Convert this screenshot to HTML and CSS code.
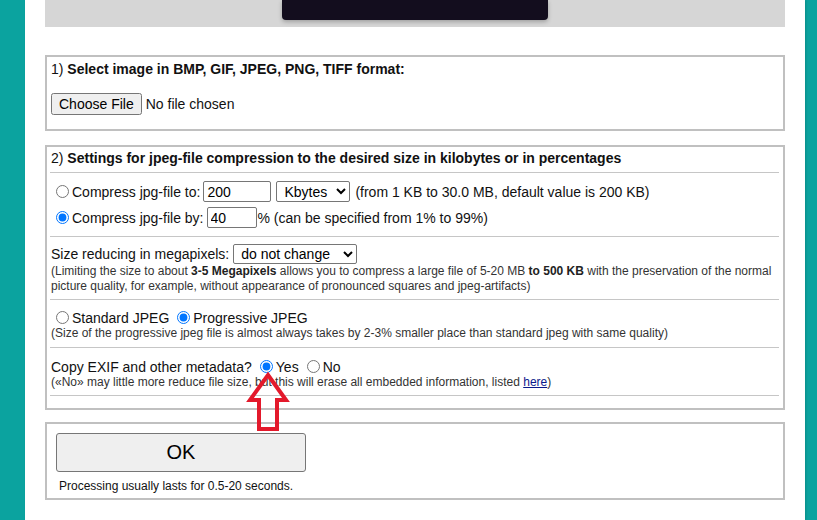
FILE: index.html
```html
<!DOCTYPE html>
<html lang="en">
<head>
  <meta charset="UTF-8">
  <title>Compress JPEG to the desired size</title>
  <link rel="stylesheet" href="styles.css">
</head>
<body>

  <div class="page">
    <!-- banner strip -->
    <div class="banner">
      <div class="banner-ad"></div>
    </div>

    <form class="tool-form" onsubmit="return false;">

      <!-- step 1: file -->
      <div class="box box-file">
        <div class="step-title">1) <b>Select image in BMP, GIF, JPEG, PNG, TIFF format:</b></div>
        <div class="file-row">
          <input type="file" name="uploadfile" accept="image/*">
        </div>
      </div>

      <!-- step 2: settings -->
      <div class="box box-settings">
        <div class="step-title section">2) <b>Settings for jpeg-file compression to the desired size in kilobytes or in percentages</b></div>

        <div class="section size-opts">
          <div class="row">
            <label><input type="radio" name="mode" value="size"> Compress jpg-file to:</label>
            <input type="text" class="inp-size" value="200">
            <select class="sel-units">
              <option>Kbytes</option>
              <option>Mbytes</option>
            </select>
            <span>(from 1 KB to 30.0 MB, default value is 200 KB)</span>
          </div>
          <div class="row">
            <label><input type="radio" name="mode" value="percent" checked> Compress jpg-file by:</label>
            <input type="text" class="inp-percent" value="40"><span class="pct">% (can be specified from 1% to 99%)</span>
          </div>
        </div>

        <div class="section mpx">
          <div class="row">
            <span>Size reducing in megapixels:</span>
            <select class="sel-mpx">
              <option>do not change</option>
              <option>3 Megapixels</option>
              <option>5 Megapixels</option>
            </select>
          </div>
          <div class="note">(Limiting the size to about <b>3-5 Megapixels</b> allows you to compress a large file of 5-20 MB <b>to 500 KB</b> with the preservation of the normal picture quality, for example, without appearance of pronounced squares and jpeg-artifacts)</div>
        </div>

        <div class="section jpeg-type">
          <div class="row">
            <label><input type="radio" name="progressive" value="0">Standard JPEG</label>
            <label class="gap"><input type="radio" name="progressive" value="1" checked>Progressive JPEG</label>
          </div>
          <div class="note">(Size of the progressive jpeg file is almost always takes by 2-3% smaller place than standard jpeg with same quality)</div>
        </div>

        <div class="section exif">
          <div class="row">
            <span>Copy EXIF and other metadata?</span>
            <label class="gap"><input type="radio" name="exif" value="1" checked>Yes</label>
            <label class="gap"><input type="radio" name="exif" value="0">No</label>
          </div>
          <div class="note">(«No» may little more reduce file size, but this will erase all embedded information, listed <a href="#">here</a>)</div>
        </div>
      </div>

      <!-- step 3: submit -->
      <div class="box box-submit">
        <button type="submit" class="ok-btn">OK</button>
        <div class="note hint">Processing usually lasts for 0.5-20 seconds.</div>
      </div>

    </form>

    <!-- hint arrow pointing at the EXIF option -->
    <svg class="hint-arrow" width="44" height="62" viewBox="0 0 44 62">
      <polygon points="22,3 40,28 31,28 31,57 13,57 13,28 4,28" fill="none" stroke="#e3192b" stroke-width="4" stroke-linejoin="miter"/>
    </svg>
  </div>

</body>
</html>
```

FILE: styles.css
```css
* {
  box-sizing: border-box;
}
body {
  margin: 0;
  background: #0ba39f;
  font-family: Arial, 'Liberation Sans', sans-serif;
  font-size: 14px;
  color: #111;
  overflow: hidden;
}
.page {
  position: relative;
  width: 780px;
  min-height: 520px;
  margin-left: 25px;
  padding: 0 20px;
  background: #fff;
  box-shadow: 1px 0 2px rgba(0, 0, 0, 0.15);
}

/* top banner */
.banner {
  height: 27px;
  background: #d6d6d6;
  display: flex;
  justify-content: center;
}
.banner-ad {
  width: 266px;
  height: 20px;
  background: #130d1e;
  border-radius: 0 0 4px 4px;
  box-shadow: 0 2px 4px rgba(0, 0, 0, 0.25);
}

.tool-form {
  padding-top: 28px;
}

/* boxes */
.box {
  border: 2px solid #c0c0c0;
  padding: 0 4px;
  margin-bottom: 14px;
}
.step-title {
  line-height: 16px;
  padding-top: 4px;
}
.box-file {
  padding-bottom: 15px;
}
.file-row {
  margin-top: 16px;
  height: 21px;
}
.file-row input {
  font-family: Arial, 'Liberation Sans', sans-serif;
  font-size: 14px;
  margin: 0;
}

.section {
  border-bottom: 1px solid #c6c6c6;
  margin-left: -1px;
  padding-left: 1px;
}
.box-settings .step-title {
  padding-top: 3px;
  padding-bottom: 6px;
}
.box-settings {
  padding-bottom: 12px;
  margin-bottom: 12px;
}
.row {
  display: flex;
  align-items: center;
  height: 21px;
  white-space: nowrap;
}
.row label {
  display: flex;
  align-items: center;
}
.row input[type="radio"] {
  margin: 0 3px 0 5px;
}
.row label.gap {
  margin-left: 3px;
}
.row input[type="text"],
.row select {
  font-family: Arial, 'Liberation Sans', sans-serif;
  font-size: 14px;
  height: 21px;
  padding: 0 3px;
  border: 1px solid #767676;
  border-radius: 2px;
  color: #000;
  background: #fff;
}
.size-opts {
  padding-top: 8px;
  padding-bottom: 8px;
}
.size-opts .row + .row {
  margin-top: 5px;
}
.inp-size {
  width: 68px;
  margin: 0 5px 0 3px;
}
.sel-units {
  width: 74px;
  margin-right: 5px;
}
.inp-percent {
  width: 50px;
  margin: 0 1px 0 3px;
}
.mpx {
  padding-top: 7px;
  padding-bottom: 5px;
}
.mpx .row {
  height: 20px;
}
.sel-mpx {
  width: 124px;
  margin-left: 4px;
  height: 20px !important;
}
.note {
  font-size: 12px;
  line-height: 15px;
  color: #333;
}
.note b {
  color: #222;
}
.note a {
  color: #0b1a8c;
}
.jpeg-type {
  padding-top: 9px;
  padding-bottom: 6px;
}
.jpeg-type .row,
.exif .row {
  height: 17px;
}
.exif {
  padding-top: 10px;
  padding-bottom: 5px;
}

/* submit */
.box-submit {
  padding: 9px 9px 4px;
  margin-bottom: 0;
}
.ok-btn {
  display: block;
  width: 250px;
  height: 39px;
  font-family: Arial, 'Liberation Sans', sans-serif;
  font-size: 20px;
  color: #000;
  background: #efefef;
  border: 1px solid #767676;
  border-radius: 3px;
}
.hint {
  margin-top: 7px;
  margin-left: 3px;
  color: #111;
}

.hint-arrow {
  position: absolute;
  left: 221px;
  top: 372px;
}
```
